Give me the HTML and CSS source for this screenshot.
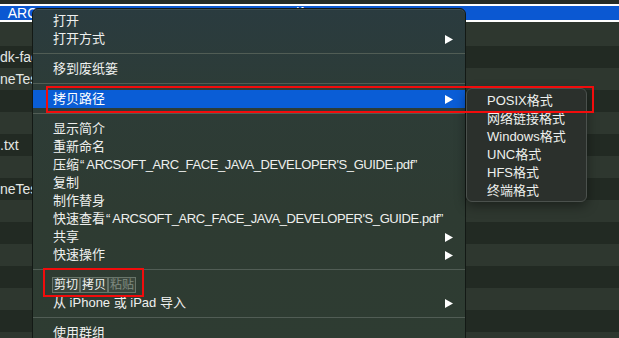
FILE: index.html
```html
<!DOCTYPE html>
<html lang="zh-CN">
<head>
    <meta charset="UTF-8">
    <meta name="viewport" content="width=device-width, initial-scale=1.0">
    <title>拷贝路径 - Finder</title>
    <link rel="stylesheet" href="styles.css">
</head>
<body>
    <!-- finder list behind the menu -->
    <div class="finder">
        <div class="row-top"></div>
        <div class="row selected"><span class="name">_ARC_FACE_JAVA_DEVELOPER'S_GUIDE.pdf</span></div>
        <div class="row light first"></div>
        <div class="row dark"><span class="name">dk-face</span></div>
        <div class="row light"><span class="name">neTest</span></div>
        <div class="row dark"></div>
        <div class="row light"></div>
        <div class="row dark"><span class="name">.txt</span></div>
        <div class="row light"></div>
        <div class="row dark"><span class="name">neTest</span></div>
        <div class="row light"></div>
        <div class="row dark"></div>
        <div class="row light"></div>
        <div class="row dark"></div>
        <div class="row light"></div>
        <div class="row dark"></div>
        <div class="row light"></div>
    </div>

    <div class="menu">
        <div class="item">打开</div>
        <div class="item">打开方式<svg class="arrow" viewBox="0 0 8 9"><polygon points="0,0 8,4.5 0,9"/></svg></div>
        <div class="sep"></div>
        <div class="item">移到废纸篓</div>
        <div class="sep"></div>
        <div class="item active">拷贝路径<svg class="arrow" viewBox="0 0 8 9"><polygon points="0,0 8,4.5 0,9"/></svg></div>
        <div class="sep"></div>
        <div class="item">显示简介</div>
        <div class="item">重新命名</div>
        <div class="item"><span>压缩<span class="quote">“</span><span class="file">ARCSOFT_ARC_FACE_JAVA_DEVELOPER'S_GUIDE.pdf</span>”</span></div>
        <div class="item">复制</div>
        <div class="item">制作替身</div>
        <div class="item"><span>快速查看<span class="quote">“</span><span class="file">ARCSOFT_ARC_FACE_JAVA_DEVELOPER'S_GUIDE.pdf</span>”</span></div>
        <div class="item">共享<svg class="arrow" viewBox="0 0 8 9"><polygon points="0,0 8,4.5 0,9"/></svg></div>
        <div class="item">快速操作<svg class="arrow" viewBox="0 0 8 9"><polygon points="0,0 8,4.5 0,9"/></svg></div>
        <div class="sep"></div>
        <div class="item edit">
            <div class="edit-group">
                <span class="edit-btn">剪切</span>
                <span class="edit-btn">拷贝</span>
                <span class="edit-btn disabled">粘贴</span>
            </div>
        </div>
        <div class="item">从 iPhone 或 iPad 导入<svg class="arrow" viewBox="0 0 8 9"><polygon points="0,0 8,4.5 0,9"/></svg></div>
        <div class="sep"></div>
        <div class="item">使用群组</div>
    </div>

    <div class="submenu">
        <div class="item">POSIX格式</div>
        <div class="item">网络链接格式</div>
        <div class="item">Windows格式</div>
        <div class="item">UNC格式</div>
        <div class="item">HFS格式</div>
        <div class="item">终端格式</div>
    </div>

    <div class="mark mark-path"></div>
    <div class="mark mark-edit"></div>
</body>
</html>
```

FILE: styles.css
```css
* {
    box-sizing: border-box;
}

body {
    margin: 0;
    width: 619px;
    height: 338px;
    overflow: hidden;
    position: relative;
    background-color: #222a23;
    font-family: "Liberation Sans", "Noto Sans CJK SC", sans-serif;
}

/* finder rows */
.row-top {
    height: 4px;
    background-color: #262c27;
}

.row {
    height: 22px;
    line-height: 22px;
    font-size: 14px;
    color: #e4e7e4;
    white-space: nowrap;
    overflow: hidden;
}

.row.selected {
    height: 18px;
    line-height: 14px;
    border-top: 2px solid #fff;
    border-bottom: 2px solid #fff;
    background-color: #0b58d2;
    color: #fff;
}

.row.first {
    height: 24px;
}

.row.light {
    background-color: #2e372f;
}

.row.dark {
    background-color: #222a23;
}

/* context menu */
.menu {
    position: absolute;
    left: 32px;
    top: 8px;
    width: 434px;
    height: 340px;
    padding: 3px 0;
    border: 1px solid #131915;
    border-radius: 6px 6px 0 0;
    background: linear-gradient(180deg, #2a3b3f 0%, #2d3c37 25%, #2e3b32 60%, #2e3c32 100%);
    box-shadow: inset 0 1px 0 rgba(255, 255, 255, 0.1);
    color: #eef0ee;
    font-size: 13px;
}

.item {
    height: 18px;
    line-height: 18px;
    padding: 0 12px 0 20px;
    display: flex;
    justify-content: space-between;
    align-items: center;
    white-space: nowrap;
}

.item.active {
    background-color: #0a5dd6;
    color: #fff;
}

.quote {
    margin: 0 2px 0 1px;
}

.file {
    letter-spacing: -0.4px;
}

.arrow {
    width: 8px;
    height: 9px;
    fill: #fff;
}

.sep {
    margin: 5px 0 6px;
    border-top: 1px solid #515d55;
}

.item.edit {
    padding-left: 19px;
}

.edit-group {
    display: flex;
}

.edit-btn {
    width: 28px;
    height: 16px;
    line-height: 14px;
    border: 1px solid #68756a;
    background-color: #3a463c;
    font-size: 12px;
    text-align: center;
    color: #f2f4f2;
}

.edit-btn.disabled {
    color: #7f8a80;
}

/* copy-path submenu */
.submenu {
    position: absolute;
    left: 466px;
    top: 88px;
    width: 121px;
    height: 114px;
    padding: 3px 0;
    border: 1px solid #4b514d;
    border-radius: 6px;
    background-color: #2b302c;
    box-shadow: 0 4px 12px rgba(0, 0, 0, 0.4);
    color: #eef0ee;
    font-size: 13px;
}

/* red annotation boxes */
.mark {
    position: absolute;
    border: 2px solid #f20c0c;
}

.mark-path {
    left: 46px;
    top: 86px;
    width: 548px;
    height: 27px;
}

.mark-edit {
    left: 43px;
    top: 268px;
    width: 101px;
    height: 29px;
}
```
